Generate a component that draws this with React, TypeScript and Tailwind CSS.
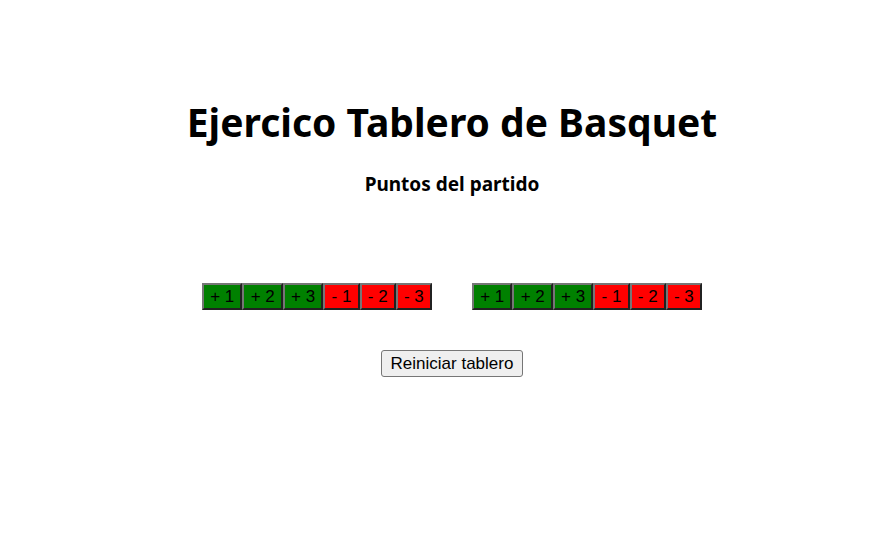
import { useState } from "react";

const additions = [1, 2, 3];
const subtractions = [1, 2, 3];

const pointButton =
  "grow border-2 border-t-[#767676] border-l-[#767676] border-r-[#212121] border-b-[#212121] px-[6px] text-[17px] leading-[23px] text-black";

function PointControls({ team, onChange }: { team: string; onChange: (points: number) => void }) {
  return (
    <div role="group" aria-label={team} className="flex w-[230px]">
      {additions.map((n) => (
        <button key={`add-${n}`} type="button" onClick={() => onChange(n)} className={`${pointButton} bg-[#008000]`}>
          {`+ ${n}`}
        </button>
      ))}
      {subtractions.map((n) => (
        <button key={`sub-${n}`} type="button" onClick={() => onChange(-n)} className={`${pointButton} bg-[#ff0000]`}>
          {`- ${n}`}
        </button>
      ))}
    </div>
  );
}

export default function App() {
  const [, setScore] = useState({ local: 0, visitor: 0 });

  return (
    <main className="flex min-h-screen flex-col items-center bg-white pt-24 pl-[26px] font-['Liberation_Sans',Arial,sans-serif] text-black">
      <h1 className="font-['Noto_Sans',sans-serif] text-[39px] leading-[52px] font-bold">
        Ejercico Tablero de Basquet
      </h1>
      <h2 className="mt-[23px] font-['Noto_Sans',sans-serif] text-[19px] leading-[26px] font-bold">
        Puntos del partido
      </h2>
      <div className="mt-[86px] flex flex-wrap justify-center gap-10">
        <PointControls team="Local" onChange={(n) => setScore((s) => ({ ...s, local: s.local + n }))} />
        <PointControls team="Visitante" onChange={(n) => setScore((s) => ({ ...s, visitor: s.visitor + n }))} />
      </div>
      <button
        type="button"
        onClick={() => setScore({ local: 0, visitor: 0 })}
        className="mt-10 w-[142px] rounded-[3px] border border-[#767676] bg-[#efefef] text-[17px] leading-[25px] whitespace-nowrap"
      >
        Reiniciar tablero
      </button>
    </main>
  );
}
